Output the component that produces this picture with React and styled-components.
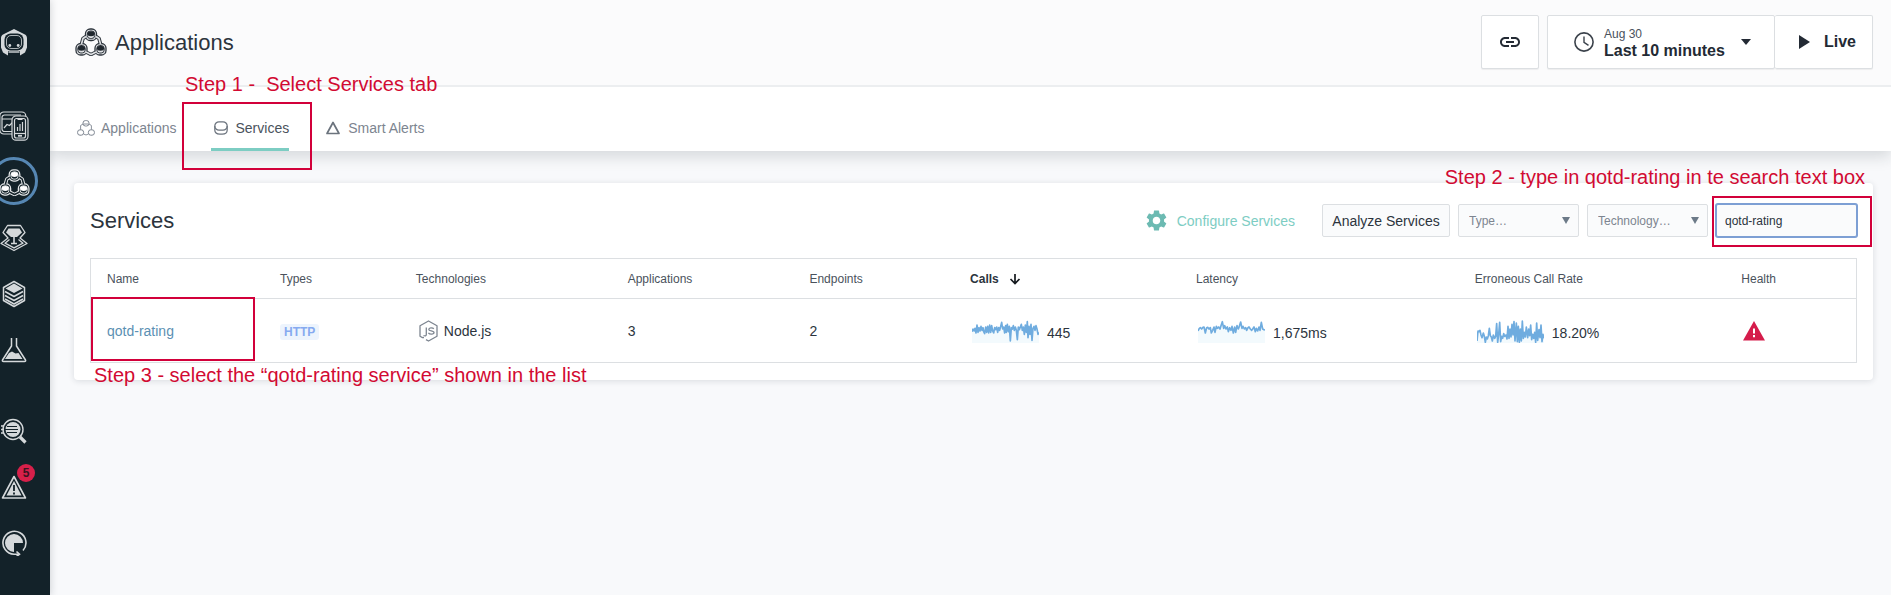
import React from "react";
import styled, { createGlobalStyle, css } from "styled-components";

const color = {
  rail: "#132229",
  ink: "#2c343d",
  text: "#4a525c",
  muted: "#7d8590",
  line: "#dcdfe2",
  teal: "#7dcdc3",
  note: "#d20a32",
  noteBox: "#d2003a",
};

const GlobalStyle = createGlobalStyle`
  *, *::before, *::after { box-sizing: border-box; }
  body {
    margin: 0;
    background: #f8f9fb;
    color: ${color.ink};
    font-family: "Liberation Sans", Arial, sans-serif;
    font-size: 14px;
    line-height: 20px;
  }
  button, select, input { font-family: inherit; margin: 0; }
  svg { display: block; flex: none; }
`;

const Shell = styled.div`
  display: flex;
  min-height: 100vh;
`;

const Rail = styled.nav`
  flex: none;
  width: 50px;
  padding-top: 28px;
  background: ${color.rail};
  overflow: hidden;
  box-shadow: 0 0 8px rgba(20, 30, 40, 0.2);
  z-index: 1;
`;

const RailLogo = styled.a`
  display: block;
  width: 28px;
  margin-bottom: 42px;
`;

const RailGroup = styled.ul`
  list-style: none;
  margin: 0 0 25px;
  padding: 0;
`;

const RailLink = styled.a`
  position: relative;
  display: flex;
  align-items: center;
  justify-content: center;
  width: 28px;
  height: 56px;
  ${(p) =>
    p.$active &&
    css`
      &::before {
        content: "";
        position: absolute;
        left: -10px;
        top: 3px;
        width: 48px;
        height: 48px;
        border: 3px solid #5687b3;
        border-radius: 50%;
      }
    `}
`;

const Badge = styled.span`
  position: absolute;
  left: 17px;
  top: 5px;
  width: 18px;
  height: 18px;
  border-radius: 50%;
  background: #d7204a;
  color: #3a1420;
  font-size: 12px;
  font-weight: bold;
  line-height: 18px;
  text-align: center;
`;

const Main = styled.main`
  flex: 1;
  min-width: 0;
`;

const Header = styled.header`
  display: flex;
  align-items: center;
  justify-content: space-between;
  padding: 15px 18px 16px 24px;
  background: #fbfbfc;
  border-bottom: 2px solid #eceef0;
`;

const Title = styled.h1`
  display: flex;
  align-items: center;
  gap: 8px;
  margin: 0;
  padding-left: 1px;
  font-size: 22px;
  font-weight: normal;
  line-height: 30px;
`;

const TitleText = styled.span`
  padding-top: 2px;
`;

const HeaderActions = styled.div`
  display: flex;
  gap: 8px;
`;

const HeaderButton = styled.button`
  display: flex;
  align-items: center;
  gap: ${(p) => p.$gap || 0}px;
  height: 54px;
  padding: ${(p) => p.$pad};
  background: #fff;
  border: 1px solid ${color.line};
  border-radius: 2px;
  box-shadow: 0 1px 1px rgba(0, 0, 0, 0.06);
  color: #232a34;
  font-size: 16px;
  font-weight: bold;
  line-height: 18px;
  text-align: left;
`;

const ButtonGroup = styled.div`
  display: flex;
  & > button + button { border-left: 0; }
`;

const TimeLabel = styled.span`
  display: flex;
  flex-direction: column;
  width: 127px;
  padding-top: 2px;
`;

const TimeDate = styled.span`
  font-size: 12px;
  font-weight: normal;
  line-height: 16px;
  color: ${color.text};
`;

const Tabs = styled.nav`
  display: flex;
  gap: 34px;
  height: 64px;
  padding-left: 26px;
  background: #fff;
  box-shadow: 0 6px 14px rgba(30, 40, 50, 0.15);
  clip-path: inset(0 0 -24px 0);
`;

const TabsArea = styled.div`
  position: relative;
`;

const Tab = styled.a`
  position: relative;
  display: flex;
  align-items: center;
  gap: 5px;
  padding-top: ${(p) => (p.$active ? 21 : 18)}px;
  border-bottom: ${(p) => (p.$active ? `3px solid ${color.teal}` : "0")};
  color: ${(p) => (p.$active ? color.text : color.muted)};
  text-decoration: none;
`;

const TabIcon = styled.span`
  display: flex;
  justify-content: center;
  width: 20px;
`;

const NoteBox = styled.span`
  position: absolute;
  left: ${(p) => p.$left}px;
  top: ${(p) => p.$top}px;
  width: ${(p) => p.$width}px;
  height: ${(p) => p.$height}px;
  border: 2px solid ${color.noteBox};
  pointer-events: none;
`;

const NoteText = styled.span`
  position: absolute;
  top: ${(p) => p.$top}px;
  ${(p) => (p.$right !== undefined ? `right: ${p.$right}px;` : `left: ${p.$left}px;`)}
  color: ${color.note};
  font-size: 20px;
  line-height: 24px;
  white-space: pre;
  pointer-events: none;
`;

const Card = styled.section`
  margin: 32px 18px 24px 24px;
  padding: 21px 16px 17px;
  background: #fff;
  border-radius: 4px;
  box-shadow: 0 1px 6px rgba(30, 40, 60, 0.14);
`;

const CardHead = styled.div`
  display: flex;
  align-items: center;
  justify-content: space-between;
  margin-bottom: 21px;
`;

const CardTitle = styled.h2`
  margin: 0;
  padding-top: 1px;
  font-size: 22px;
  font-weight: normal;
  line-height: 28px;
`;

const Toolbar = styled.div`
  display: flex;
  align-items: center;
  gap: 8px;
`;

const ConfigureLink = styled.a`
  display: flex;
  align-items: center;
  gap: 10px;
  margin-right: 19px;
  color: ${color.teal};
  text-decoration: none;
`;

const control = css`
  height: 33px;
  border: 1px solid ${color.line};
  border-radius: 2px;
  background: #fafbfc;
`;

const PlainButton = styled.button`
  ${control}
  width: 128px;
  padding: 0;
  color: ${color.ink};
  font-size: 14px;
`;

const SelectWrap = styled.span`
  position: relative;
  display: block;
  svg {
    position: absolute;
    right: 9px;
    top: 13px;
    pointer-events: none;
  }
`;

const Select = styled.select`
  ${control}
  appearance: none;
  display: block;
  width: 121px;
  padding: 0 20px 0 10px;
  color: ${color.muted};
  font-size: 12px;
`;

const SearchWrap = styled.span`
  position: relative;
  display: block;
`;

const Search = styled.input`
  ${control}
  display: block;
  width: 141px;
  padding: 0 8px;
  border-color: #7d9fd4;
  box-shadow: 0 0 0 1px #7d9fd4;
  outline: none;
  color: ${color.ink};
  font-size: 12px;
`;

const Table = styled.table`
  width: 100%;
  table-layout: fixed;
  border: 1px solid ${color.line};
  border-spacing: 0;
`;

const Th = styled.th`
  height: 40px;
  padding: 0 0 0 16px;
  border-bottom: 1px solid ${color.line};
  color: ${(p) => (p.$sorted ? color.ink : color.text)};
  font-size: 12px;
  font-weight: ${(p) => (p.$sorted ? "bold" : "normal")};
  text-align: left;
`;

const Td = styled.td`
  position: relative;
  height: 63px;
  padding: 0 0 0 16px;
`;

const Inline = styled.span`
  display: flex;
  align-items: center;
  gap: ${(p) => p.$gap}px;
  padding-left: ${(p) => p.$indent || 0}px;
`;

const MetricValue = styled.span`
  padding-top: 5px;
`;

const ServiceLink = styled.a`
  color: #5b90b3;
  text-decoration: none;
`;

const Tag = styled.span`
  display: inline-block;
  padding: 0 4px;
  border-radius: 3px;
  background: #edf4fd;
  color: #86aaf0;
  font-size: 12px;
  font-weight: bold;
  line-height: 16px;
  vertical-align: middle;
`;

const HIDDEN = { "aria-hidden": true };

/* Three linked nodes; outline, band and core take separate colours. */
function NodesIcon({ width, height, outline, band, core }) {
  const nodes = [[16, 6.5], [6.5, 21], [25.5, 21]];
  const links = "M11 8.500 8 10.500 6.500 16M21 8.500l3 2 1.500 5.500M11 24l5 2.500 5-2.500";
  return (
    <svg width={width} height={height} viewBox="0 0 32 28" fill="none" {...HIDDEN}>
      <path d={links} stroke={outline} strokeWidth="3.600" strokeLinejoin="round" />
      {nodes.map(([x, y]) => (
        <rect key={`${x}-${y}`} x={x - 5.5} y={y - 5.5} width="11" height="11.500" rx="4.600" fill={band} stroke={outline} strokeWidth="1.300" />
      ))}
      <path d={links} stroke={band} strokeWidth="1.600" strokeLinejoin="round" />
      {nodes.map(([x, y]) => (
        <g key={`${x}-${y}`}>
          <rect x={x - 3.7} y={y - 3.5} width="7.400" height="7.500" rx="3" stroke={outline} strokeWidth="1" />
          <ellipse cx={x} cy={y - 0.8} rx="3.600" ry="2.500" fill={core} />
        </g>
      ))}
    </svg>
  );
}

function NodesOutline() {
  return (
    <svg width="18" height="16" viewBox="0 0 18 16" fill="none" stroke={color.muted} {...HIDDEN}>
      <rect x="6" y=".6" width="6" height="5.400" rx="2.400" />
      <rect x=".6" y="9.800" width="6" height="5.400" rx="2.400" />
      <rect x="11.400" y="9.800" width="6" height="5.400" rx="2.400" />
      <path d="M6.500 4h5M6 4 3.600 5.500v4M12 4l2.400 1.500v4M6.600 14 9 15l2.400-1" strokeWidth=".9" />
    </svg>
  );
}

function DiscIcon() {
  return (
    <svg width="14" height="14" viewBox="0 0 14 14" fill="none" stroke="#6b737d" strokeWidth="1.200" {...HIDDEN}>
      <rect x=".8" y=".8" width="12.400" height="8.400" rx="4.200" />
      <path d="M.8 5v4c0 2.500 2 4.200 5 4.200h2.400c3 0 5-1.700 5-4.200V5" />
    </svg>
  );
}

function TriangleIcon() {
  return (
    <svg width="14" height="14" viewBox="0 0 14 14" fill="none" stroke="#6b737d" strokeWidth="1.700" strokeLinejoin="round" {...HIDDEN}>
      <path d="M7 1.500 13 12.500H1z" />
    </svg>
  );
}

const G = "#d5d9db";
const D = color.rail;

function RobotLogo() {
  return (
    <svg width="28" height="28" viewBox="0 0 28 28" {...HIDDEN}>
      <path d="M14 1 25 6.500c1.500 1 2 2 2 4v9l-2 5-5 3v-4.500H8v4.500l-5-3-2-5v-9c0-2 .5-3 2-4z" fill={G} />
      <rect x="4.500" y="5.500" width="19" height="17" rx="6" fill={D} />
      <rect x="6.500" y="7.500" width="15" height="13" rx="4.500" fill={D} stroke={G} strokeWidth=".8" />
      <circle cx="9.800" cy="17.500" r="1.400" fill={G} />
      <circle cx="18.200" cy="17.500" r="1.400" fill={G} />
      <path d="M8.500 24h11" stroke={G} strokeWidth="1.400" />
    </svg>
  );
}

function MonitorIcon() {
  return (
    <svg width="30" height="30" viewBox="0 0 30 30" fill="none" stroke={G} strokeWidth="1.200" {...HIDDEN}>
      <rect x=".8" y="1" width="26" height="22" rx="4" />
      <path d="M13 20.500H5.500a2.500 2.500 0 0 1-2.500-2.500V6.500A2.500 2.500 0 0 1 5.500 4H22M3 8h11" />
      <path d="m5 17 3-3.500 2.500 1L14 11" />
      <rect x="13" y="5" width="16" height="24.200" rx="4" fill={D} />
      <rect x="15.500" y="7.500" width="11" height="19.500" rx="2" />
      <path d="M18.500 20v-4M21 20v-7M23.500 20v-9M18.500 8.500h5" />
      <path d="M15.500 22.500h11" />
      <path d="M19 24.800h4" strokeWidth="1.800" />
    </svg>
  );
}

function PlatformIcon() {
  return (
    <svg width="28" height="28" viewBox="0 0 28 28" fill="none" stroke={G} strokeWidth="1.300" strokeLinejoin="round" {...HIDDEN}>
      <path d="M7.500 1.500h13L25 8.500 20 14l7 5.500-13 7-13-7L8 14 3 8.500z" />
      <path d="M8.500 4.500h11L22 8.500l-5 4.500h-6L6 8.500z" fill={G} stroke="none" />
      <path d="M9.500 15.500 5 19.200l9 4.600 9-4.600-4.500-3.700" />
      <path d="M14 13v7" stroke={D} strokeWidth="3.500" />
      <path d="M14 12v8M11 19.500h6" strokeWidth="1.600" />
    </svg>
  );
}

function StackIcon() {
  return (
    <svg width="26" height="28" viewBox="0 0 26 28" fill="none" stroke={G} strokeWidth="1.500" strokeLinejoin="round" {...HIDDEN}>
      <path d="m13 1.500 10.500 6v13L13 26.500l-10.500-6v-13z" />
      <path d="m13 3.500 8.500 5L13 13 4.500 8.500z" fill={G} stroke="none" />
      <path d="m4 11.500 9 5 9-5M4 15.500l9 5 9-5M4 19l9 5 9-5" />
    </svg>
  );
}

function FlaskIcon() {
  return (
    <svg width="26" height="26" viewBox="0 0 26 26" fill="none" stroke={G} strokeWidth="1.500" strokeLinejoin="round" {...HIDDEN}>
      <path d="M10.500 1v8L1.500 23c-.4.900 0 1.500 1 1.500h21c1 0 1.400-.6 1-1.500l-9-14V1" />
      <path d="m8 16 3-1.500 3.500 2 3-.5 4 6H4z" fill={G} stroke="none" />
    </svg>
  );
}

function AnalyzeIcon() {
  return (
    <svg width="26" height="26" viewBox="0 0 26 26" fill="none" stroke={G} {...HIDDEN}>
      <circle cx="12" cy="11.500" r="10" strokeWidth="1.400" />
      <circle cx="12" cy="11.500" r="7.500" fill={G} stroke="none" />
      <path d="M6 8.500h10M4 11.500h13M6 14.500h10" stroke={D} strokeWidth="1.100" />
      <path d="M0 8h3M0 11.500h3M0 15h3" strokeWidth="1.400" />
      <path d="m19 19 5.500 5.500" strokeWidth="3.200" />
    </svg>
  );
}

function EventsIcon() {
  return (
    <svg width="26" height="26" viewBox="0 0 26 26" fill="none" stroke={G} strokeWidth="1.600" strokeLinejoin="round" {...HIDDEN}>
      <path d="M13 2.500 24.500 24h-23z" />
      <path d="M13 7 20.500 21.500h-15z" fill={G} stroke="none" />
      <path d="M13 11v6M13 18.500v2" stroke={D} strokeWidth="1.800" />
    </svg>
  );
}

function UsageIcon() {
  return (
    <svg width="26" height="26" viewBox="0 0 26 26" fill="none" stroke={G} strokeWidth="1.600" {...HIDDEN}>
      <path d="M22 20.500a11.500 11.500 0 1 0-9 3.800h4.500" />
      <path d="m15.500 21.500 3 2.800-3 2.200" />
      <path d="M13 13h9a9 9 0 1 0-9 9z" fill={G} stroke="none" />
    </svg>
  );
}

function LinkIcon() {
  return (
    <svg width="24" height="24" viewBox="0 0 24 24" fill="#232a34" {...HIDDEN}>
      <path d="M3.900 12c0-1.710 1.390-3.100 3.100-3.100h4V7H7c-2.760 0-5 2.240-5 5s2.240 5 5 5h4v-1.900H7c-1.710 0-3.100-1.390-3.100-3.100zM8 13h8v-2H8v2zm9-6h-4v1.900h4c1.710 0 3.100 1.390 3.100 3.100s-1.390 3.100-3.100 3.100h-4V17h4c2.760 0 5-2.240 5-5s-2.240-5-5-5z" />
    </svg>
  );
}

function ClockIcon() {
  return (
    <svg width="20" height="20" viewBox="0 0 20 20" fill="none" stroke="#3b424b" strokeWidth="1.600" {...HIDDEN}>
      <circle cx="10" cy="10" r="9.100" />
      <path d="M10 4.500v5.800l4.500 3" strokeWidth="1.400" />
    </svg>
  );
}

function Caret({ width = 10, height = 6, fill = "#232a34" }) {
  return (
    <svg width={width} height={height} viewBox="0 0 10 6" preserveAspectRatio="none" {...HIDDEN}>
      <path d="M0 0h10L5 6z" fill={fill} />
    </svg>
  );
}

function PlayIcon() {
  return (
    <svg width="11" height="14" viewBox="0 0 11 14" {...HIDDEN}>
      <path d="M0 0 11 7 0 14z" fill="#232a34" />
    </svg>
  );
}

function GearIcon() {
  return (
    <svg width="21" height="21" viewBox="2 2 20 20" fill="#6cbab2" {...HIDDEN}>
      <path d="M19.140 12.940c.04-.3.060-.61.060-.94 0-.32-.02-.64-.07-.94l2.030-1.580a.49.490 0 0 0 .12-.61l-1.920-3.320a.488.488 0 0 0-.59-.22l-2.390.96c-.5-.38-1.030-.7-1.620-.94l-.36-2.540a.484.484 0 0 0-.48-.41h-3.840c-.24 0-.43.170-.47.410l-.36 2.540c-.59.240-1.130.57-1.620.94l-2.390-.96c-.22-.08-.47 0-.59.220L2.740 8.870c-.12.210-.08.470.12.610l2.030 1.580c-.05.300-.09.630-.09.940s.02.640.070.940l-2.030 1.580a.49.490 0 0 0-.12.610l1.920 3.320c.12.220.37.290.59.220l2.390-.96c.5.380 1.030.7 1.620.94l.36 2.540c.05.240.24.410.48.410h3.840c.24 0 .44-.17.470-.41l.36-2.540c.59-.24 1.130-.56 1.620-.94l2.390.96c.22.080.47 0 .59-.22l1.920-3.320c.12-.22.070-.47-.12-.61l-2.010-1.580zM12 15.600A3.610 3.610 0 0 1 8.400 12c0-1.980 1.620-3.600 3.600-3.600s3.600 1.620 3.600 3.600-1.620 3.600-3.600 3.600z" />
    </svg>
  );
}

function SortArrow() {
  return (
    <svg width="12" height="12" viewBox="0 0 12 12" fill="none" stroke="#15191e" strokeWidth="1.700" {...HIDDEN}>
      <path d="M6 1v9.500M1.500 6 6 10.500 10.500 6" />
    </svg>
  );
}

function NodeJsIcon() {
  return (
    <svg width="19" height="22" viewBox="0 0 19 22" fill="none" stroke={color.muted} strokeWidth="1.300" strokeLinejoin="round" {...HIDDEN}>
      <path d="M5 17.500 3.500 17.600 1 16.200V5.700L9.500 1 18 5.700v10.600L9.500 21 7 19.600" />
      <path d="M7.300 7.500v7c0 1.400-1.300 1.700-2.800 1M14.800 8.800c-1.200-1.300-5-1.200-5 .6 0 2.100 5.200.9 5.200 3.200 0 2-4.400 2-5.600.3" />
    </svg>
  );
}

function AlertIcon() {
  return (
    <svg width="22" height="20" viewBox="0 0 22 20" {...HIDDEN}>
      <path d="M11 0 22 19.500H0z" fill="#d51c4b" />
      <path d="M11 7.500v5M11 14v2.300" stroke="#fff" strokeWidth="2" />
    </svg>
  );
}

const series = {
  calls: [38, 30, 36, 28, 42, 18, 40, 26, 36, 22, 34, 26, 38, 44, 24, 40, 22, 42, 18, 40, 20, 36, 42, 26, 32, 24, 40, 26, 34, 22, 10, 30, 24, 42, 20, 40, 16, 38, 22, 66, 26, 30, 20, 34, 24, 34, 62, 24, 32, 24, 16, 34, 24, 46, 18, 40, 8, 56, 22, 46, 16, 64, 28, 22, 34, 20, 30, 46, 40],
  latency: [36, 28, 26, 30, 25, 24, 42, 26, 25, 30, 26, 42, 34, 24, 40, 22, 28, 24, 30, 20, 8, 28, 20, 30, 24, 38, 26, 34, 22, 42, 24, 40, 20, 30, 22, 9, 28, 22, 30, 26, 34, 26, 24, 30, 34, 30, 24, 38, 28, 36, 24, 34, 10, 30, 32, 33],
  errors: [66, 36, 38, 34, 48, 56, 42, 52, 70, 54, 60, 50, 28, 50, 54, 66, 48, 58, 52, 14, 70, 46, 10, 68, 52, 58, 44, 52, 48, 60, 22, 58, 30, 54, 16, 48, 8, 66, 12, 68, 22, 70, 30, 66, 6, 58, 40, 54, 24, 56, 30, 50, 18, 62, 46, 58, 40, 70, 12, 64, 32, 56, 18, 68, 46, 58],
};

function Sparkline({ values, label }) {
  const step = 201 / (values.length - 1);
  const line = values.map((v, i) => `${Math.round(i * step)},${v}`).join(" ");
  return (
    <svg width="67" height="24" viewBox="0 0 201 72" role="img" aria-label={label}>
      <polygon points={`0,72 ${line} 201,72`} fill="#f3fafd" />
      <polyline points={line} fill="none" stroke="#6facdf" strokeWidth="5" strokeLinejoin="round" />
    </svg>
  );
}

const primaryNav = [
  { name: "Monitoring", icon: <MonitorIcon /> },
  { name: "Applications", icon: <NodesIcon width={31} height={27} outline="#e6e9ea" band={D} core="#fff" />, active: true },
  { name: "Platforms", icon: <PlatformIcon /> },
  { name: "Infrastructure", icon: <StackIcon /> },
  { name: "Synthetics", icon: <FlaskIcon /> },
];

const secondaryNav = [
  { name: "Analytics", icon: <AnalyzeIcon /> },
  { name: "Events", icon: <EventsIcon />, count: 5 },
  { name: "Usage", icon: <UsageIcon /> },
];

function RailItems({ items }) {
  return (
    <RailGroup>
      {items.map((item) => (
        <li key={item.name}>
          <RailLink href="#" aria-label={item.name} $active={item.active}>
            {item.icon}
            {item.count && <Badge>{item.count}</Badge>}
          </RailLink>
        </li>
      ))}
    </RailGroup>
  );
}

function FilterSelect({ label }) {
  return (
    <SelectWrap>
      <Select aria-label={label} defaultValue="">
        <option value="">{label}…</option>
      </Select>
      <Caret width={8} height={7} fill="#6c7a88" />
    </SelectWrap>
  );
}

const columns = [
  ["Name", "9.8%"],
  ["Types", "7.7%"],
  ["Technologies", "12%"],
  ["Applications", "10.3%"],
  ["Endpoints", "9.1%"],
  ["Calls", "12.8%"],
  ["Latency", "15.8%"],
  ["Erroneous Call Rate", "15.1%"],
  ["Health", "7.4%"],
];

function Metric({ values, label, children }) {
  return (
    <Inline $gap={8} $indent={2}>
      <Sparkline values={values} label={label} />
      <MetricValue>{children}</MetricValue>
    </Inline>
  );
}

export default function App() {
  return (
    <>
      <GlobalStyle />
      <Shell>
        <Rail aria-label="Main">
          <RailLogo href="#" aria-label="Home">
            <RobotLogo />
          </RailLogo>
          <RailItems items={primaryNav} />
          <RailItems items={secondaryNav} />
        </Rail>
        <Main>
          <Header>
            <Title>
              <NodesIcon width={32} height={28} outline="#2f363e" band="#dfe1e4" core="#1f262d" />
              <TitleText>Applications</TitleText>
            </Title>
            <HeaderActions>
              <HeaderButton $pad="0 16px" aria-label="Copy link">
                <LinkIcon />
              </HeaderButton>
              <ButtonGroup>
                <HeaderButton $pad="0 23px 0 26px" $gap={10}>
                  <ClockIcon />
                  <TimeLabel>
                    <TimeDate>Aug 30</TimeDate>
                    Last 10 minutes
                  </TimeLabel>
                  <Caret />
                </HeaderButton>
                <HeaderButton $pad="0 16px 0 24px" $gap={14}>
                  <PlayIcon />
                  Live
                </HeaderButton>
              </ButtonGroup>
            </HeaderActions>
          </Header>
          <TabsArea>
            <Tabs as="nav" aria-label="Views" style={undefined}>
              <Tab href="#">
                <TabIcon><NodesOutline /></TabIcon>
                Applications
              </Tab>
              <Tab href="#" $active aria-current="page">
                <TabIcon><DiscIcon /></TabIcon>
                Services
              </Tab>
              <Tab href="#">
                <TabIcon><TriangleIcon /></TabIcon>
                Smart Alerts
              </Tab>
            </Tabs>
            <NoteBox $left={132} $top={15} $width={130} $height={68} />
            <NoteText $left={135} $top={-15}>{"Step 1 -  Select Services tab"}</NoteText>
          </TabsArea>
          <Card>
            <CardHead>
              <CardTitle>Services</CardTitle>
              <Toolbar>
                <ConfigureLink href="#">
                  <GearIcon />
                  Configure Services
                </ConfigureLink>
                <PlainButton>Analyze Services</PlainButton>
                <FilterSelect label="Type" />
                <FilterSelect label="Technology" />
                <SearchWrap>
                  <Search type="text" aria-label="Search services" defaultValue="qotd-rating" />
                  <NoteBox $left={-4} $top={-8} $width={160} $height={51} />
                  <NoteText $right={-8} $top={-39}>Step 2 - type in qotd-rating in te search text box</NoteText>
                </SearchWrap>
              </Toolbar>
            </CardHead>
            <Table>
              <colgroup>
                {columns.map(([name, width]) => (
                  <col key={name} width={width} />
                ))}
              </colgroup>
              <thead>
                <tr>
                  {columns.map(([name]) =>
                    name === "Calls" ? (
                      <Th key={name} $sorted aria-sort="descending">
                        <Inline $gap={10}>
                          {name}
                          <SortArrow />
                        </Inline>
                      </Th>
                    ) : (
                      <Th key={name}>{name}</Th>
                    )
                  )}
                </tr>
              </thead>
              <tbody>
                <tr>
                  <Td>
                    <ServiceLink href="#">qotd-rating</ServiceLink>
                    <NoteBox $left={0} $top={-2} $width={164} $height={64} />
                    <NoteText $left={3} $top={64}>Step 3 - select the “qotd-rating service” shown in the list</NoteText>
                  </Td>
                  <Td><Tag>HTTP</Tag></Td>
                  <Td>
                    <Inline $gap={6} $indent={3}>
                      <NodeJsIcon />
                      Node.js
                    </Inline>
                  </Td>
                  <Td>3</Td>
                  <Td>2</Td>
                  <Td><Metric values={series.calls} label="Calls trend">445</Metric></Td>
                  <Td><Metric values={series.latency} label="Latency trend">1,675ms</Metric></Td>
                  <Td><Metric values={series.errors} label="Error rate trend">18.20%</Metric></Td>
                  <Td>
                    <Inline $indent={2} role="img" aria-label="Critical">
                      <AlertIcon />
                    </Inline>
                  </Td>
                </tr>
              </tbody>
            </Table>
          </Card>
        </Main>
      </Shell>
    </>
  );
}
